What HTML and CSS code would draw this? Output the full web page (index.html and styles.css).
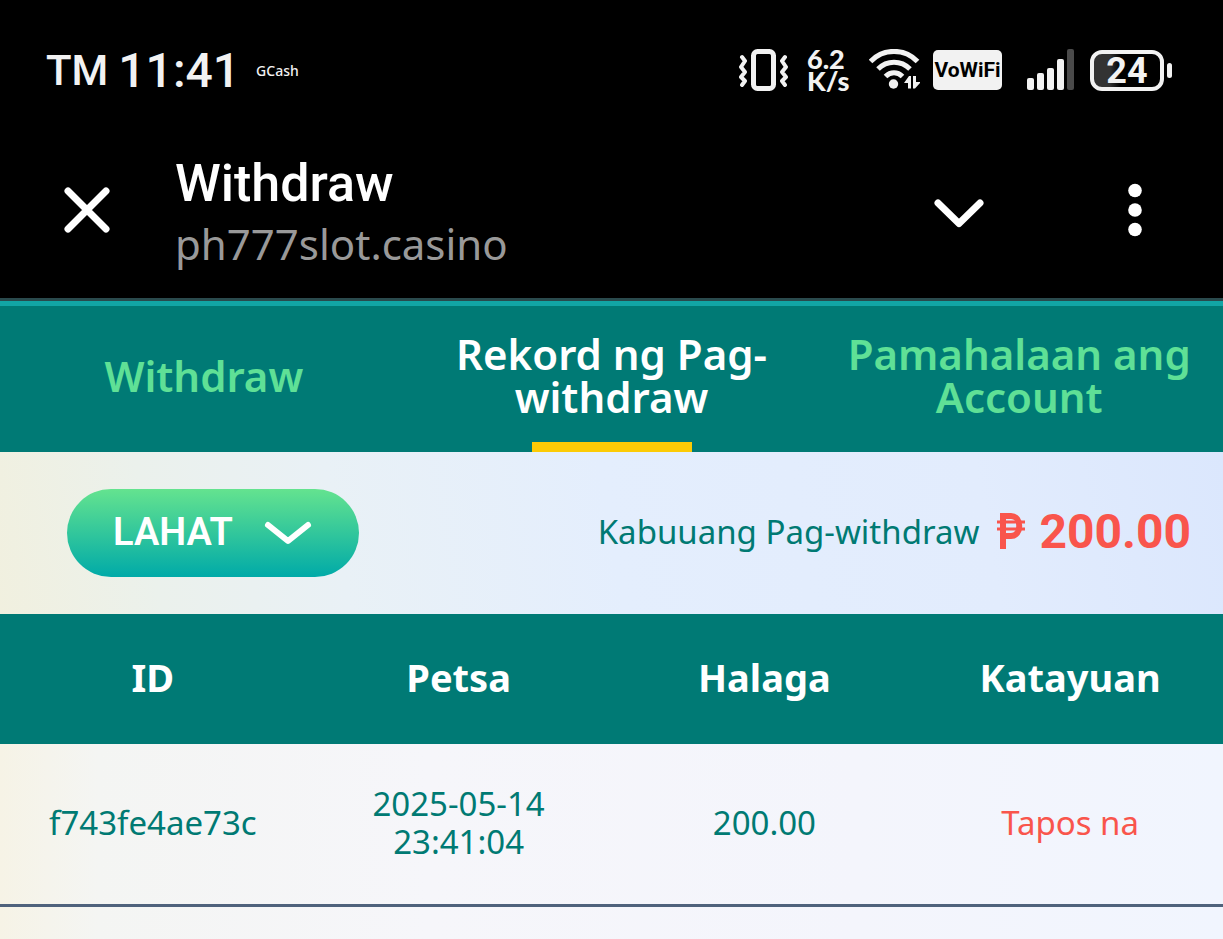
FILE: index.html
```html
<!DOCTYPE html>
<html lang="fil">
<head>
  <meta charset="UTF-8" />
  <title>Withdraw</title>
  <meta name="viewport" content="width=device-width, initial-scale=1.0" />
  <link rel="stylesheet" href="styles.css">
</head>
<body>
  <!-- Status bar -->
  <div class="status-bar">
    <div class="status-left">
      <span class="carrier">TM</span>
      <span class="clock">11:41</span>
      <span class="notice">GCash</span>
    </div>
    <div class="status-right">
      <svg width="56" height="42" viewBox="0 0 56 42" fill="none" stroke="#f2f2f2">
        <rect x="15.500" y="2.500" width="20" height="37" rx="4" stroke-width="5"/>
        <path d="M4 8l3 4-4 6 4 5-4 5 4 4-3 4M47 8l-3 4 4 6-4 5 4 5-4 4 3 4" stroke-width="4" stroke-linecap="round" stroke-linejoin="round"/>
      </svg>
      <div class="net-speed"><span>6.2</span><span>K/s</span></div>
      <svg width="51" height="42" viewBox="0 0 51 42" fill="none" stroke="#f2f2f2" stroke-width="5">
        <path d="M1.500 12.500C14-1 36-1 48.500 12.500M9 20c9-9 23-9 32 0M16.500 27.500c5-5 12-5 17 0"/>
        <circle cx="24.500" cy="35" r="4.700" fill="#f2f2f2" stroke="none"/>
        <path d="M35 34l5-7h2v12.500h-3V34zM44 27h3v6h5l-6 6.500h-2z" fill="#f2f2f2" stroke="none"/>
      </svg>
      <span class="vowifi">VoWiFi</span>
      <svg width="62" height="42" viewBox="0 0 62 42" fill="#f2f2f2">
        <rect x="12" y="29" width="7" height="12" rx="2"/>
        <rect x="22" y="24" width="7" height="17" rx="2"/>
        <rect x="32" y="19" width="7" height="22" rx="2"/>
        <rect x="42" y="10" width="7" height="31" rx="2"/>
        <rect x="52" y="0" width="7" height="41" rx="2" fill="#4a4a4a"/>
      </svg>
      <div class="battery"><span class="battery-level">24</span></div>
    </div>
  </div>

  <!-- Browser header -->
  <header class="app-bar">
    <button class="icon-btn" aria-label="Close">
      <svg width="46" height="46" viewBox="0 0 46 46" fill="none" stroke="#fff" stroke-width="7" stroke-linecap="round">
        <path d="M4 4l38 38M42 4L4 42"/>
      </svg>
    </button>
    <div class="page-title">
      <h1>Withdraw</h1>
      <p>ph777slot.casino</p>
    </div>
    <button class="icon-btn" aria-label="Expand">
      <svg width="50" height="36" viewBox="0 0 50 36" fill="none" stroke="#fff" stroke-width="7" stroke-linecap="round" stroke-linejoin="round">
        <path d="M4 11l21 20.500L46 11"/>
      </svg>
    </button>
    <button class="icon-btn menu-btn" aria-label="Menu">
      <svg width="14" height="54" viewBox="0 0 14 54" fill="#fff">
        <circle cx="7" cy="7.500" r="6.800"/>
        <circle cx="7" cy="27" r="6.800"/>
        <circle cx="7" cy="46.500" r="6.800"/>
      </svg>
    </button>
  </header>

  <!-- Tabs -->
  <nav class="tabs">
    <a href="#withdraw">Withdraw</a>
    <a href="#rekord" class="active">Rekord ng Pag-<br>withdraw</a>
    <a href="#account">Pamahalaan ang Account</a>
  </nav>

  <main>
    <!-- Filter and total -->
    <section class="summary">
      <div class="filter">
        <select aria-label="Filter">
          <option>LAHAT</option>
        </select>
        <svg width="50" height="26" viewBox="0 0 50 26" fill="none" stroke="#fff" stroke-width="6" stroke-linecap="round" stroke-linejoin="round">
          <path d="M5 5l20 16L45 5"/>
        </svg>
      </div>
      <div class="total">
        <span class="total-label">Kabuuang Pag-withdraw</span>
        <strong class="total-amount">
          <svg width="28" height="36" viewBox="0 0 28 36" fill="none" stroke="#f9554c" role="img" aria-label="₱">
            <path d="M6 36V3h8c11 0 11 20 0 20H6" stroke-width="6"/>
            <path d="M0 9h28M0 16h28" stroke-width="3"/>
          </svg>
          200.00
        </strong>
      </div>
    </section>

    <!-- Withdrawal records -->
    <table class="records">
      <thead>
        <tr>
          <th>ID</th>
          <th>Petsa</th>
          <th>Halaga</th>
          <th>Katayuan</th>
        </tr>
      </thead>
      <tbody>
        <tr>
          <td>f743fe4ae73c</td>
          <td>2025-05-14<br>23:41:04</td>
          <td>200.00</td>
          <td class="done">Tapos na</td>
        </tr>
      </tbody>
    </table>
  </main>
</body>
</html>
```
FILE: styles.css
```css
* {
  box-sizing: border-box;
}

body {
  margin: 0;
  min-height: 100vh;
  display: flex;
  flex-direction: column;
  background: #000;
  color: #007a73;
  font-family: "Noto Sans", sans-serif;
}

/* Status bar */
.status-bar {
  display: flex;
  justify-content: space-between;
  align-items: center;
  height: 140px;
  padding: 0 51px 0 46px;
  color: #f2f2f2;
}
.status-left,
.status-right {
  display: flex;
  align-items: center;
}
.status-left {
  gap: 10px;
  font-family: Roboto, sans-serif;
  font-weight: 500;
}
.carrier {
  font-size: 42px;
}
.clock {
  font-size: 48px;
}
.notice {
  font-family: "Noto Sans", sans-serif;
  font-size: 14px;
  padding-left: 6px;
}
.status-right {
  gap: 13px;
}
.net-speed {
  display: flex;
  flex-direction: column;
  width: 49px;
  font-family: Lato, sans-serif;
  font-size: 27px;
  font-weight: 900;
  line-height: 22px;
}
.vowifi {
  width: 69px;
  border-radius: 5px;
  background: #f2f2f2;
  color: #000;
  font-family: Roboto, sans-serif;
  font-size: 21px;
  font-weight: 700;
  line-height: 40px;
  text-align: center;
}
.battery {
  display: flex;
  align-items: center;
  gap: 3px;
}
.battery-level {
  width: 74px;
  height: 41px;
  border: 4px solid #f2f2f2;
  border-radius: 12px;
  background: linear-gradient(90deg, #333 24%, #000 40%);
  font-family: Roboto, sans-serif;
  font-size: 36px;
  font-weight: 700;
  line-height: 35px;
  text-align: center;
}
.battery::after {
  content: "";
  width: 5px;
  height: 15px;
  border-radius: 3px;
  background: #f2f2f2;
}

/* Browser header */
.app-bar {
  display: flex;
  align-items: center;
  height: 161px;
  padding: 0 81px 18px 64px;
  border-bottom: 3px solid #2a4a4d;
}
.icon-btn {
  display: flex;
  padding: 0;
  border: 0;
  background: none;
  cursor: pointer;
}
.page-title {
  flex: 1;
  padding: 4px 0 0 65px;
}
.page-title h1 {
  margin: 0;
  color: #fff;
  font-family: Roboto, sans-serif;
  font-size: 52px;
  font-weight: 500;
  line-height: 64px;
}
.page-title p {
  margin: 0;
  color: #999;
  font-family: "Noto Sans", sans-serif;
  font-size: 42px;
  line-height: 56px;
}
.menu-btn {
  margin-left: 144px;
}

/* Tabs */
.tabs {
  display: grid;
  grid-template-columns: repeat(3, 1fr);
  height: 151px;
  border-top: 5px solid #12a5a5;
  background: #007a75;
}
.tabs a {
  position: relative;
  display: flex;
  align-items: center;
  justify-content: center;
  padding: 0 32px 8px;
  color: #5fe096;
  font-size: 42px;
  font-weight: 600;
  line-height: 43px;
  text-align: center;
  text-decoration: none;
}
.tabs .active {
  color: #fff;
}
.tabs .active::after {
  content: "";
  position: absolute;
  bottom: 0;
  left: 50%;
  width: 160px;
  height: 10px;
  margin-left: -79px;
  background: #fccb05;
}

main {
  flex: 1;
  background: linear-gradient(90deg, #f6f3e6, #f4f5f3 8%, #f6f6fa 35%, #f4f5fc 70%, #f1f5fe);
}

/* Filter and total */
.summary {
  display: flex;
  align-items: center;
  justify-content: space-between;
  height: 162px;
  padding: 0 32px 0 67px;
  background: linear-gradient(80deg, #f1f0df, #ebf1ec 13%, #e9f1f6 28%, #e4eefd 50%, #e2ecfd 80%, #dbe7fd);
}
.filter {
  display: grid;
  align-items: center;
}
.filter select,
.filter svg {
  grid-area: 1 / 1;
}
.filter select {
  appearance: none;
  width: 292px;
  height: 88px;
  padding: 0 0 2px 46px;
  border: 0;
  border-radius: 44px;
  background: linear-gradient(#64e38f, #00aaa8);
  color: #fff;
  font-family: Roboto, sans-serif;
  font-size: 38px;
  font-weight: 600;
}
.filter svg {
  justify-self: end;
  margin-right: 46px;
  pointer-events: none;
}
.total {
  display: flex;
  align-items: center;
  gap: 18px;
  padding-bottom: 4px;
}
.total-label {
  font-size: 33px;
}
.total-amount {
  display: flex;
  align-items: center;
  gap: 14px;
  color: #f9554c;
  font-family: Roboto, sans-serif;
  font-size: 48px;
  font-weight: 700;
}

/* Records table */
.records {
  width: 100%;
  border-spacing: 0;
  table-layout: fixed;
  text-align: center;
}
.records th {
  height: 130px;
  padding: 0 0 4px;
  background: #007a75;
  color: #fff;
  font-size: 38px;
  font-weight: 700;
}
.records td {
  height: 163px;
  padding: 0 0 2px;
  border-bottom: 3px solid #4f627c;
  font-size: 33px;
  line-height: 38px;
}
.records .done {
  color: #f9554c;
}
```
